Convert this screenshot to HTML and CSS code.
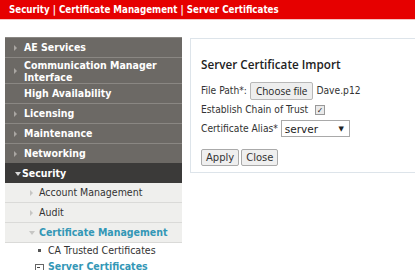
FILE: index.html
```html
<!DOCTYPE html>
<html lang="en">
<head>
  <meta charset="UTF-8">
  <title>Server Certificates</title>
  <link rel="stylesheet" href="styles.css">
</head>

<body>
  <div class="crumbs">Security | Certificate Management | Server Certificates</div>

  <div class="layout">
    <ul class="menu">
      <li><a class="closed" href="javascript:">AE Services</a></li>
      <li><a class="closed tall" href="javascript:">Communication Manager<br>Interface</a></li>
      <li><a href="javascript:">High Availability</a></li>
      <li><a class="closed" href="javascript:">Licensing</a></li>
      <li><a class="closed" href="javascript:">Maintenance</a></li>
      <li><a class="closed" href="javascript:">Networking</a></li>
      <li class="open">
        <a class="current" href="javascript:">Security</a>
        <ul class="sub">
          <li><a class="closed" href="javascript:">Account Management</a></li>
          <li><a class="closed" href="javascript:">Audit</a></li>
          <li class="open">
            <a class="current" href="javascript:">Certificate Management</a>
            <ul class="leaf">
              <li><a href="javascript:">CA Trusted Certificates</a></li>
              <li class="active"><a href="javascript:">Server Certificates</a></li>
            </ul>
          </li>
        </ul>
      </li>
    </ul>

    <div class="panel">
      <h3>Server Certificate Import</h3>
      <form class="form">
        <div class="row">
          <label>File Path*:</label>
          <span class="file-btn">Choose file</span>
          <span>Dave.p12</span>
        </div>
        <div class="row">
          <label>Establish Chain of Trust</label>
          <span class="check">&#10003;</span>
        </div>
        <div class="row">
          <label>Certificate Alias*</label>
          <span class="select">server<i>&#9660;</i></span>
        </div>
        <div class="buttons">
          <button type="button">Apply</button>
          <button type="button">Close</button>
        </div>
      </form>
    </div>
  </div>
</body>

</html>
```

FILE: styles.css
```css
* {
  margin: 0;
  padding: 0;
  box-sizing: border-box;
}

body {
  font-family: "DejaVu Sans Condensed", "DejaVu Sans", sans-serif;
  font-size: 11px;
  overflow: hidden;
  background: #fff;
}

a {
  text-decoration: none;
}

ul {
  list-style: none;
}

.crumbs {
  height: 20px;
  line-height: 19px;
  padding-left: 9px;
  background: #e60000;
  color: #fff;
  font-weight: bold;
  font-size: 9.7px;
  border-bottom: 1px solid #f6c4c4;
}

.layout {
  display: flex;
  align-items: flex-start;
  gap: 8px;
  padding: 17px 0 0 5px;
}

/* left menu */
.menu {
  width: 177px;
  flex: none;
}

.menu > li > a {
  position: relative;
  display: block;
  height: 20px;
  line-height: 19px;
  padding-left: 19px;
  background: #6c6965;
  border-top: 1px solid #8a8783;
  color: #fff;
  font-weight: bold;
  font-size: 10.5px;
}

.menu > li > a.tall {
  height: 26px;
  line-height: 12px;
  padding-top: 1px;
}

.menu a.closed::before,
.menu a.current::before {
  content: "";
  position: absolute;
  left: 9px;
  top: 7px;
  border-left: 3px solid #a9a6a2;
  border-top: 3px solid transparent;
  border-bottom: 3px solid transparent;
}

.menu > li > a.tall::before {
  top: 10px;
}

.menu > li.open > a {
  background: #3b3a39;
  border-top-color: #3b3a39;
  padding-left: 17px;
}

.menu > li > a.current::before {
  left: 10px;
  top: 8px;
  border-top: 4px solid #d8d8d8;
  border-left: 3px solid transparent;
  border-right: 3px solid transparent;
  border-bottom: 0;
}

.sub > li > a {
  position: relative;
  display: block;
  height: 20px;
  line-height: 19px;
  padding-left: 34px;
  background: #efefed;
  border-bottom: 1px solid #dadad8;
  color: #333;
  font-size: 10.5px;
}

.sub a.closed::before {
  left: 25px;
  border-left-color: #c6c6c4;
}

.sub > li > a.current {
  color: #3397b6;
  font-weight: bold;
}

.sub > li > a.current::before {
  left: 24px;
  top: 8px;
  border-top: 4px solid #c6c6c4;
  border-left: 3px solid transparent;
  border-right: 3px solid transparent;
  border-bottom: 0;
}

.leaf {
  background: #fff;
}

.leaf li a {
  position: relative;
  display: block;
  height: 16px;
  line-height: 15px;
  padding-left: 43px;
  color: #333;
  font-size: 10.5px;
}

.leaf li a::before {
  content: "";
  position: absolute;
  left: 33px;
  top: 6px;
  width: 3px;
  height: 3px;
  background: #555;
}

.leaf li.active a {
  color: #3397b6;
  font-weight: bold;
}

.leaf li.active a::before {
  left: 30px;
  top: 5px;
  width: 7px;
  height: 7px;
  background: #fff;
  border: 1px solid #666;
}

.leaf li.active a::after {
  content: "";
  position: absolute;
  left: 32px;
  top: 8px;
  width: 3px;
  height: 1px;
  background: #444;
}

/* content panel */
.panel {
  width: 240px;
  flex: none;
  margin-top: 1px;
  height: 135px;
  padding: 17px 0 0 10px;
  border: 1px solid #dde4ea;
  color: #222;
}

.panel h3 {
  font-family: "Open Sans", "DejaVu Sans", sans-serif;
  font-size: 11.7px;
  font-weight: 600;
  line-height: 16px;
  margin-bottom: 9px;
}

.row {
  display: flex;
  align-items: center;
  gap: 3px;
  height: 19px;
  font-size: 10.2px;
  color: #333;
}

.file-btn {
  height: 18px;
  line-height: 16px;
  padding: 0 5px;
  border: 1px solid #b8b8b8;
  border-radius: 2px;
  background: #eee;
  font-family: "Open Sans", sans-serif;
  font-size: 10px;
  color: #222;
}

.check {
  width: 10px;
  height: 10px;
  margin-left: 4px;
  line-height: 9px;
  font-size: 8px;
  text-align: center;
  border: 1px solid #999;
  background: #eaeaea;
  color: #111;
}

.select {
  display: flex;
  justify-content: space-between;
  align-items: center;
  width: 69px;
  height: 17px;
  padding: 0 5px 0 3px;
  border: 1px solid #a9a9a9;
  font-family: "DejaVu Sans", sans-serif;
  font-size: 10.5px;
  color: #222;
}

.select i {
  font-style: normal;
  font-size: 7px;
}

.buttons {
  display: flex;
  gap: 2px;
  margin-top: 11px;
}

.buttons button {
  height: 17px;
  padding: 0 4px;
  border: 1px solid #aaa;
  border-radius: 2px;
  background: #efefef;
  font-family: "DejaVu Sans", sans-serif;
  font-size: 10px;
  color: #333;
}
```
